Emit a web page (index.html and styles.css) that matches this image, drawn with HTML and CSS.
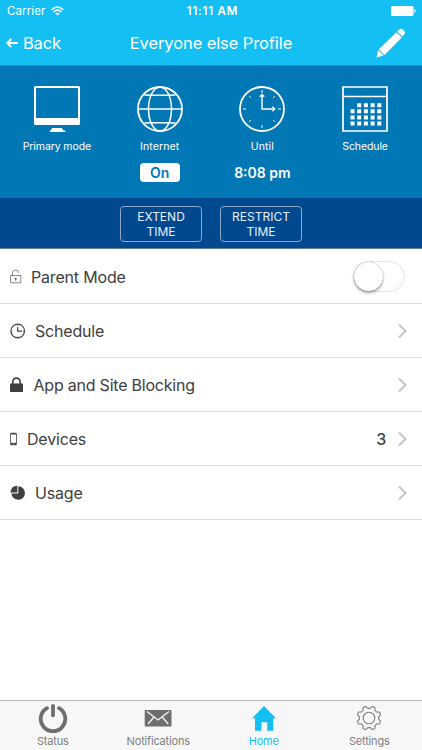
FILE: index.html
```html
<!DOCTYPE html>
<html lang="en">
<head>
<meta charset="utf-8">
<title>Everyone else Profile</title>
<link rel="stylesheet" href="styles.css">
</head>
<body>
<div class="app">
  <header class="header">
    <div class="statusbar">
      <div class="carrier"><span>Carrier</span>
        <svg class="wifi" width="13" height="10" viewBox="0 0 13 10" fill="none" stroke="#fff" stroke-width="1.5"><path d="M.6 3.8Q6.5-1.8 12.4 3.8M2.6 5.9Q6.5 2.2 10.4 5.9"/><path d="M4.3 7.4Q6.5 5.6 8.7 7.4L6.5 9.6z" fill="#fff" stroke="none"/></svg>
      </div>
      <div class="clock">11:11 AM</div>
      <svg class="battery" width="25" height="10" viewBox="0 0 25 10" fill="#fff"><rect width="22.5" height="10" rx="1.5"/><path d="M23.2 3.3q1.5.3 1.5 1.7t-1.5 1.7z"/></svg>
    </div>
    <nav class="navbar">
      <a class="back"><svg width="12" height="10" viewBox="0 0 12 10" fill="none" stroke="#fff" stroke-width="2"><path d="M12 5H1.5M5.2 1L1.4 5l3.8 4"/></svg><span>Back</span></a>
      <h1 class="title">Everyone else Profile</h1>
      <svg class="pencil" width="30" height="30" viewBox="0 0 30 30" fill="#fff"><path d="M.5 29.500L2.200 22l5.500 5.600z"/><path d="M3 21.200L20.400 4.300l5.400 5.300L8.500 26.900z"/><path d="M21.200 3.400l2-2q1.800-1.500 3.400 0l1.600 1.600q1.700 1.800 0 3.600l-1.700 2z"/></svg>
    </nav>
  </header>

  <section class="summary">
    <div class="tile">
      <svg width="46" height="48" viewBox="0 0 46 48"><rect x="1" y="2" width="44" height="37" rx=".5" fill="none" stroke="#fff" stroke-width="2"/><path d="M1 33h44v6H1zM18 43h10l1 2.200 2.400.5v1.200H15.800v-1.200l1.200-.5z" fill="#fff"/></svg>
      <div class="caption c-mode">Primary mode</div>
    </div>
    <div class="tile">
      <svg width="46" height="48" viewBox="0 0 46 48" fill="none" stroke="#fff" stroke-width="1.5"><circle cx="23" cy="24" r="22" stroke-width="1.8"/><ellipse cx="23" cy="24" rx="11.500" ry="22"/><path d="M1 24h44M7.500 10Q23 10.500 38.500 10M7.500 38Q23 37.500 38.500 38"/></svg>
      <div class="caption">Internet</div>
      <div class="pill">On</div>
    </div>
    <div class="tile">
      <svg width="46" height="48" viewBox="0 0 46 48" fill="none" stroke="#fff" stroke-width="1.4"><circle cx="23" cy="24" r="22" stroke-width="1.8"/><path d="M23 10v14h12M20.800 11.800L23 9.600l2.200 2.200M33.500 21.800l2.200 2.200-2.200 2.200"/><path stroke-width="1" d="M23 5v3M23 40v3M4 24h3M39 24h3M10 11l2 2M34 35l2 2M36 11l-2 2M12 35l-2 2"/></svg>
      <div class="caption">Until</div>
      <div class="until">8:08 pm</div>
    </div>
    <div class="tile">
      <svg width="46" height="48" viewBox="0 0 46 48" fill="none" stroke="#fff"><path d="M1 2h44v44H1zM1 11.500h44" stroke-width="1.700"/><path stroke-width="4" stroke-dasharray="4 2.700" d="M15.200 20.200h24.100M8.500 26.300h30.800M8.500 32.400h30.800M8.500 38.500h30.800"/></svg>
      <div class="caption c-sched">Schedule</div>
    </div>
  </section>

  <section class="actions">
    <button class="action"><span>EXTEND</span><span>TIME</span></button>
    <button class="action"><span>RESTRICT</span><span>TIME</span></button>
  </section>

  <main class="list">
    <div class="row">
      <svg width="12" height="15" viewBox="0 0 12 15" fill="none" stroke="#777" stroke-width=".9"><path d="M.6 6.500h10.200v7.300H.6zM2.500 6.500V4Q2.500 1 5.500 1t3 3"/><circle cx="5.700" cy="9.700" r="1" fill="#555" stroke="none"/><path d="M5.700 10v1.800"/></svg>
      <span class="label">Parent Mode</span>
      <span class="switch"><span class="knob"></span></span>
    </div>
    <div class="row">
      <svg width="16" height="16" viewBox="0 0 16 16" fill="none" stroke="#444" stroke-width="1.200"><circle cx="7.700" cy="8" r="6.800"/><path d="M7.700 4v4.200h4.500"/><path stroke-width=".7" d="M7.700 1.500v1.300M7.700 13.300v1.200M1.300 8h1.200M13 8h1.200"/></svg>
      <span class="label">Schedule</span>
      <svg class="chevron" width="9" height="16" viewBox="0 0 9 16"><path d="M1 1.500L7.500 8 1 14.500"/></svg>
    </div>
    <div class="row">
      <svg width="14" height="16" viewBox="0 0 14 16"><rect x="0" y="6.500" width="13" height="8.500" rx=".8" fill="#3f3f3f"/><path d="M2.800 7V4.800a3.700 3.700 0 0 1 7.400 0V7" fill="none" stroke="#3f3f3f" stroke-width="1.600"/></svg>
      <span class="label app-label">App and Site Blocking</span>
      <svg class="chevron" width="9" height="16" viewBox="0 0 9 16"><path d="M1 1.500L7.500 8 1 14.500"/></svg>
    </div>
    <div class="row">
      <svg width="8" height="14" viewBox="0 0 8 14"><rect x=".2" y=".8" width="6.600" height="12.400" rx="1.200" fill="#444"/><path d="M1 2.500h5v8.300H1z" fill="#fff"/><circle cx="3.500" cy="12" r=".5" fill="#fff"/></svg>
      <span class="label">Devices</span>
      <span class="count">3</span>
      <svg class="chevron" width="9" height="16" viewBox="0 0 9 16"><path d="M1 1.500L7.500 8 1 14.500"/></svg>
    </div>
    <div class="row">
      <svg width="16" height="16" viewBox="0 0 16 16" fill="#404040"><path d="M8.300 1.200A6.800 6.800 0 1 1 1.400 8.400h6.900z"/><path d="M7.300 .8v6.600H.5Q.8 1.200 7.300 .8z"/></svg>
      <span class="label">Usage</span>
      <svg class="chevron" width="9" height="16" viewBox="0 0 9 16"><path d="M1 1.500L7.500 8 1 14.500"/></svg>
    </div>
  </main>

  <footer class="tabbar">
    <a class="tab">
      <svg width="30" height="30" viewBox="0 0 30 30" fill="none" stroke="#6e6e6e" stroke-width="3.800" stroke-linecap="round"><path d="M9 5.200A12.300 12.300 0 1 0 21 5.200"/><path d="M15 2.800v9.500"/></svg>
      <span>Status</span>
    </a>
    <a class="tab">
      <svg width="30" height="30" viewBox="0 0 30 30"><rect x="1.700" y="7" width="26.800" height="16.500" rx="1" fill="#6e6e6e"/><path d="M4 8.500l11 8.500L26 8.500M5 21l6-7M25.200 21l-6-7" fill="none" stroke="#f7f7f7" stroke-width="1.300"/></svg>
      <span>Notifications</span>
    </a>
    <a class="tab active">
      <svg width="30" height="30" viewBox="0 0 30 30" fill="#14bff4"><path d="M15 3l12 12.300h-2.700v12.400h-6.100v-8.400h-5.700v8.400H6V15.300H3z"/></svg>
      <span>Home</span>
    </a>
    <a class="tab">
      <svg width="30" height="30" viewBox="0 0 30 30" fill="none" stroke="#7c7c7c" stroke-width="1.100"><circle cx="15" cy="15" r="5.800"/><path id="gear" stroke-linejoin="round"/></svg>
      <span>Settings</span>
    </a>
  </footer>
</div>
<script src="gear.js"></script>
</body>
</html>
```

FILE: styles.css
```css
* { box-sizing: border-box; }
body { margin: 0; font-family: Inter, "Liberation Sans", sans-serif; background: #fff; color: #404040; }
svg { display: block; flex: none; }
.app { width: 422px; height: 750px; display: flex; flex-direction: column; overflow: hidden; }
.header { height: 66px; flex: none; background: #14bff4; color: #fff; border-bottom: 1px solid #0797d2; }
.statusbar { height: 22px; display: grid; grid-template-columns: 1fr auto 1fr; align-items: center; padding: 0 6px 0 7px; font-size: 11.5px; }
.carrier { display: flex; align-items: center; gap: 6px; letter-spacing: .1px; }
.clock { font-weight: 600; font-size: 11.5px; letter-spacing: .8px; padding-left: 2px; }
.battery { justify-self: end; }
.navbar { height: 42px; display: grid; grid-template-columns: 1fr auto 1fr; align-items: center; padding: 0 16px 0 6px; }
.back { display: flex; align-items: center; gap: 5px; font-size: 16.5px; letter-spacing: -.2px; }
.title { margin: 0; padding-left: 10px; font-size: 16.5px; font-weight: 400; letter-spacing: -.1px; }
.pencil { justify-self: end; }
.summary { height: 132px; flex: none; background: #0277b6; color: #fff; display: grid; grid-template-columns: repeat(4, 1fr); padding: 18.5px 5.5px 0; }
.tile { display: flex; flex-direction: column; align-items: center; }
.caption { font-size: 10.5px; line-height: 14px; margin-top: 7px; letter-spacing: .1px; white-space: nowrap; }
.c-mode { letter-spacing: -.1px; }
.c-sched { letter-spacing: -.1px; }
.pill { width: 40px; height: 19px; margin-top: 9px; border-radius: 4px; background: #fff; color: #0277b6; font-weight: 600; font-size: 14px; line-height: 19px; text-align: center; }
.until { margin-top: 9px; font-weight: 600; font-size: 14px; line-height: 19px; }
.actions { height: 51px; flex: none; background: #00498f; border-bottom: 1px solid #64809c; display: flex; justify-content: center; align-items: center; gap: 18px; padding-top: 1px; }
.action { width: 82px; height: 36px; padding: 1px 0 0; border: 1px solid #8aa9cc; border-radius: 4px; background: none; color: #e6f0fa; font: 12px/15px Inter, sans-serif; display: flex; flex-direction: column; align-items: center; justify-content: center; }
.list { flex: 1; padding-top: 1px; }
.row { height: 54px; border-bottom: 1px solid #dedede; display: flex; align-items: center; padding: 0 15px 0 10px; font-size: 16px; letter-spacing: -.18px; }
.label { margin: 0 auto 0 9px; }
.app-label { padding-left: .5px; letter-spacing: -.22px; }
.count { font-weight: 500; margin-right: 12px; }
.chevron path { fill: none; stroke: #c4c4c6; stroke-width: 2; }
.switch { width: 52px; height: 31px; border: 1.5px solid #e4e4e4; border-radius: 16px; margin-right: 2px; }
.knob { display: block; width: 29px; height: 29px; border-radius: 50%; background: #fff; box-shadow: 0 2px 3px rgba(0,0,0,.35), 0 0 1px rgba(0,0,0,.4); }
.tabbar { height: 50px; flex: none; background: #f7f7f7; border-top: 1px solid #b9b9b9; display: grid; grid-template-columns: repeat(4, 1fr); color: #808080; }
.tab { display: flex; flex-direction: column; align-items: center; padding-top: 2px; font-size: 11px; line-height: 16px; letter-spacing: -.18px; }
.active { color: #14bff4; }
```

FILE: gear.js
```js
// Outline of the settings gear: eight rounded teeth around the centre.
const points = [];
for (let i = 0; i < 180; i++) {
  const a = i * Math.PI / 90;
  const wave = Math.tanh(2.2 * Math.cos(8 * a + Math.PI)) / Math.tanh(2.2);
  const r = 10.8 + 1.2 * wave;
  points.push((15 + r * Math.sin(a)).toFixed(2) + " " + (15 - r * Math.cos(a)).toFixed(2));
}
document.getElementById("gear").setAttribute("d", "M" + points.join("L") + "Z");
```
